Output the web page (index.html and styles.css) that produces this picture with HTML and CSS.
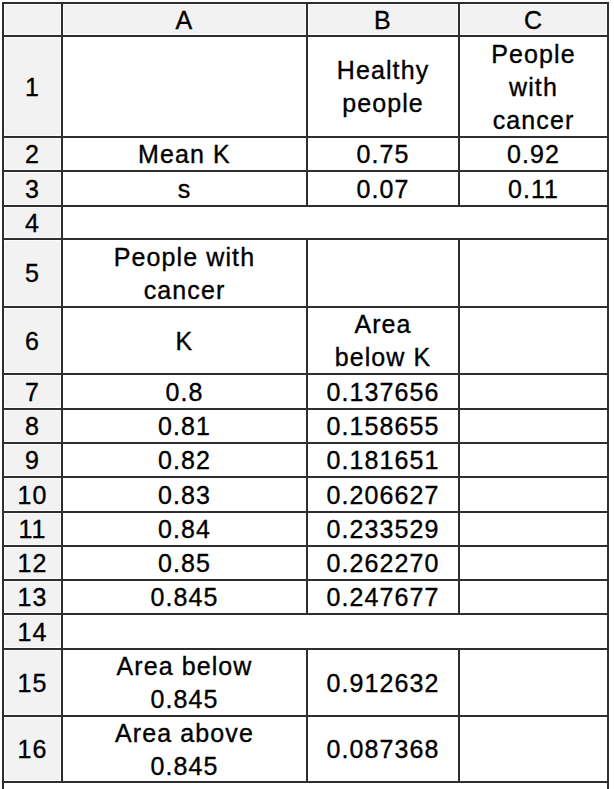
FILE: index.html
```html
<!DOCTYPE html>
<html>
<head>
<meta charset="utf-8">
<link rel="stylesheet" href="styles.css">
</head>
<body>
<div class="page">
  <div class="sheet">
    <div class="hd corner"></div>
    <div class="hd">A</div>
    <div class="hd">B</div>
    <div class="hd">C</div>

    <div class="rn">1</div>
    <div class="c"></div>
    <div class="c">Healthy<br>people</div>
    <div class="c">People<br>with<br>cancer</div>

    <div class="rn">2</div>
    <div class="c">Mean K</div>
    <div class="c">0.75</div>
    <div class="c">0.92</div>

    <div class="rn">3</div>
    <div class="c">s</div>
    <div class="c">0.07</div>
    <div class="c">0.11</div>

    <div class="rn">4</div>
    <div class="c span3"></div>

    <div class="rn">5</div>
    <div class="c">People with<br>cancer</div>
    <div class="c"></div>
    <div class="c"></div>

    <div class="rn">6</div>
    <div class="c">K</div>
    <div class="c">Area<br>below K</div>
    <div class="c"></div>

    <div class="rn">7</div>
    <div class="c">0.8</div>
    <div class="c">0.137656</div>
    <div class="c"></div>

    <div class="rn">8</div>
    <div class="c">0.81</div>
    <div class="c">0.158655</div>
    <div class="c"></div>

    <div class="rn">9</div>
    <div class="c">0.82</div>
    <div class="c">0.181651</div>
    <div class="c"></div>

    <div class="rn">10</div>
    <div class="c">0.83</div>
    <div class="c">0.206627</div>
    <div class="c"></div>

    <div class="rn">11</div>
    <div class="c">0.84</div>
    <div class="c">0.233529</div>
    <div class="c"></div>

    <div class="rn">12</div>
    <div class="c">0.85</div>
    <div class="c">0.262270</div>
    <div class="c"></div>

    <div class="rn">13</div>
    <div class="c">0.845</div>
    <div class="c">0.247677</div>
    <div class="c"></div>

    <div class="rn">14</div>
    <div class="c span3"></div>

    <div class="rn">15</div>
    <div class="c">Area below<br>0.845</div>
    <div class="c">0.912632</div>
    <div class="c"></div>

    <div class="rn">16</div>
    <div class="c">Area above<br>0.845</div>
    <div class="c">0.087368</div>
    <div class="c"></div>

    <div class="c span4"></div>
  </div>
</div>
</body>
</html>
```

FILE: styles.css
```css
html, body {
  margin: 0;
  padding: 0;
  background: #ffffff;
}

.page {
  padding: 2px 0 0 2px;
}

.sheet {
  display: grid;
  width: 603px;
  grid-template-columns: 57px 243px 150px 147px;
  grid-template-rows: 31px 99px 32px 33px 31px 66px 65px 33px 32px 32px 33px 32px 32px 32px 33px 65px 64px 20px;
  gap: 2px;
  padding: 2px;
  background: #2e2e2e;
  font-family: "Liberation Sans", Arial, sans-serif;
  font-size: 25px;
  letter-spacing: 1.1px;
  line-height: 33px;
  color: #000000;
  -webkit-text-stroke: 0.35px #000000;
}

.sheet > div {
  display: flex;
  align-items: center;
  justify-content: center;
  text-align: center;
  padding-top: 1px;
  box-sizing: border-box;
}

.c {
  background: #ffffff;
}

.hd,
.rn {
  background: #f2f2f2;
  box-shadow: inset 0 0 0 1px #fbfbfb;
}

.span3 {
  grid-column: span 3;
}

.span4 {
  grid-column: span 4;
}
```
